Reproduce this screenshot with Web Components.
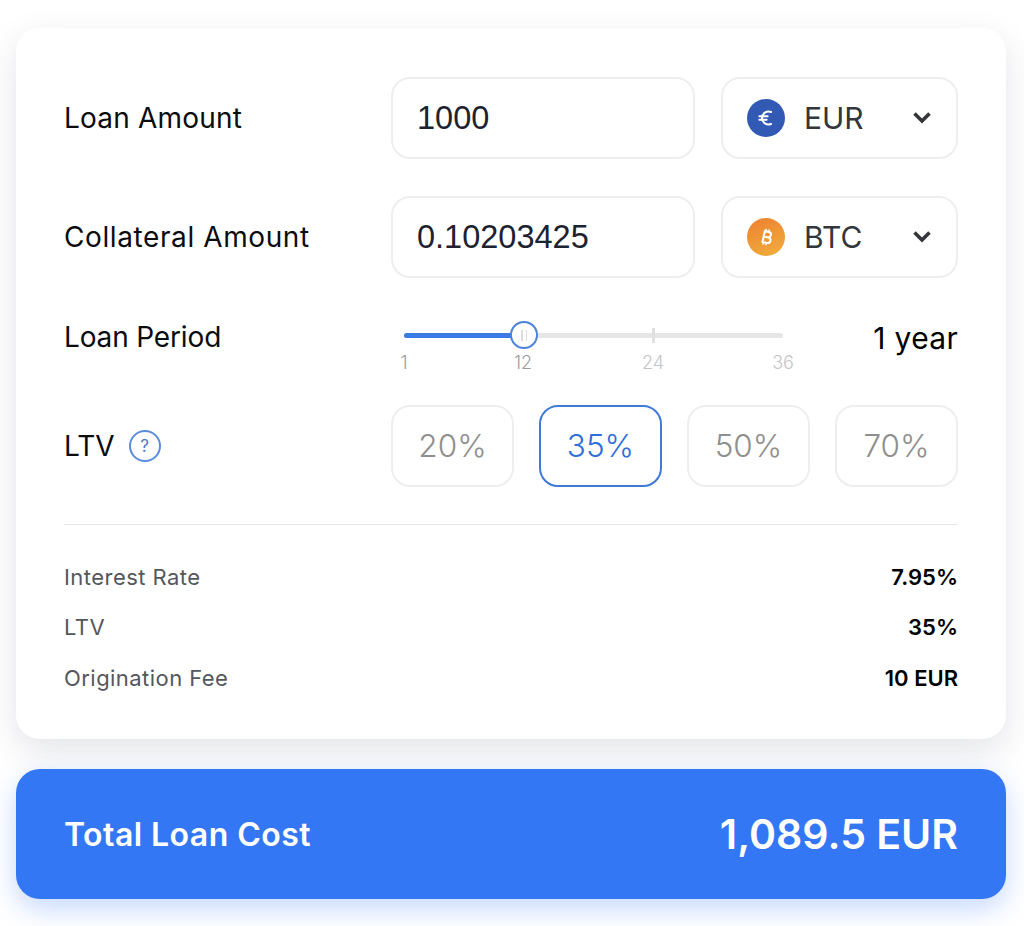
<!DOCTYPE html>
<html lang="en">
<head>
<meta charset="utf-8">
<title>Loan calculator</title>
<style>
  html, body { margin: 0; background: #fff; }
  body { font-family: Inter, "Noto Sans", sans-serif; color: #0b0c10; }
</style>
</head>
<body>
<loan-page>
  <loan-card>
    <form-row>
      <span slot="label">Loan Amount</span>
      <text-box>1000</text-box>
      <currency-select code="EUR"></currency-select>
    </form-row>
    <form-row>
      <span slot="label" style="letter-spacing:.6px">Collateral Amount</span>
      <text-box>0.10203425</text-box>
      <currency-select code="BTC"></currency-select>
    </form-row>
    <period-row></period-row>
    <ltv-row></ltv-row>
    <detail-list>
      <detail-row name="Interest Rate" value="7.95%"></detail-row>
      <detail-row name="LTV" value="35%"></detail-row>
      <detail-row name="Origination Fee" value="10 EUR"></detail-row>
    </detail-list>
  </loan-card>
  <total-bar label="Total Loan Cost" value="1,089.5 EUR"></total-bar>
</loan-page>

<script>
  const icons = {
    EUR: `<svg width="38" height="38" viewBox="0 0 38 38"><circle cx="19" cy="19" r="19" fill="#3259b4"/>
      <path d="M24 13a6.6 6.6 0 0 0-9 6 6.6 6.6 0 0 0 9 6M12.4 17.3h8.2M12.4 20.7h7.2" fill="none" stroke="#fff" stroke-width="2.1" stroke-linecap="round"/></svg>`,
    BTC: `<svg width="38" height="38" viewBox="0 0 38 38"><defs><linearGradient id="btc" x1="0.3" y1="0" x2="0.7" y2="1"><stop offset="0" stop-color="#ee8433"/><stop offset="1" stop-color="#f0ab3c"/></linearGradient></defs>
      <circle cx="19" cy="19" r="19" fill="url(#btc)"/>
      <g transform="rotate(12 19 19)" fill="none" stroke="#fff" stroke-width="2.1"><path d="M15.6 13.4h5a2.7 2.7 0 0 1 0 5.5h-5M15.6 18.9h5.6a2.8 2.8 0 0 1 0 5.7h-5.6M16.6 13v12"/><path d="M17.6 11v2.4M20.6 11v2.4M17.6 24.6v2.4M20.6 24.6v2.4" stroke-width="1.5"/></g></svg>`
  };

  class LoanPage extends HTMLElement {
    constructor() {
      super();
      this.attachShadow({ mode: "open" }).innerHTML = `
        <style>
          :host { display: flex; flex-direction: column; gap: 30px; width: 1006px; height: 926px; box-sizing: border-box; padding: 28px 0 0 16px; }
        </style>
        <slot></slot>`;
    }
  }

  class LoanCard extends HTMLElement {
    constructor() {
      super();
      this.attachShadow({ mode: "open" }).innerHTML = `
        <style>
          :host { display: flex; flex-direction: column; gap: 37px; height: 711px; box-sizing: border-box; padding: 49px 48px 36px 48px; background: #fff; border-radius: 24px; box-shadow: 0 12px 34px rgba(40, 50, 80, .13); }
        </style>
        <slot></slot>`;
    }
  }

  class FormRow extends HTMLElement {
    constructor() {
      super();
      this.attachShadow({ mode: "open" }).innerHTML = `
        <style>
          :host { display: grid; grid-template-columns: 327px 304px 263px; align-items: center; font-size: 28px; letter-spacing: .2px; }
          ::slotted(currency-select) { margin-left: 26px; }
        </style>
        <slot name="label"></slot>
        <slot></slot>`;
    }
  }

  class TextBox extends HTMLElement {
    constructor() {
      super();
      this.attachShadow({ mode: "open" }).innerHTML = `
        <style>
          :host { display: flex; align-items: center; height: 82px; box-sizing: border-box; padding: 0 24px; border: 2px solid #eeeef0; border-radius: 19px; font-family: "Liberation Sans", sans-serif; font-size: 32.5px; letter-spacing: 0; color: #1d2230; }
        </style>
        <slot></slot>`;
    }
  }

  class CurrencySelect extends HTMLElement {
    connectedCallback() {
      const code = this.getAttribute("code");
      this.attachShadow({ mode: "open" }).innerHTML = `
        <style>
          :host { display: flex; align-items: center; height: 82px; box-sizing: border-box; padding: 0 24px; border: 2px solid #eeeef0; border-radius: 19px; font-size: 30px; letter-spacing: 0; color: #33363b; }
          svg.coin { flex: none; margin-right: 19px; }
          span { flex: 1; }
          svg.arrow { flex: none; margin-top: -2px; }
        </style>
        ${icons[code].replace("<svg", '<svg class="coin"')}
        <span>${code}</span>
        <svg class="arrow" width="20" height="13" viewBox="0 0 20 13"><path d="M2.5 2.5 10 10l7.5-7.5" fill="none" stroke="#33363b" stroke-width="3.6"/></svg>`;
    }
  }

  class PeriodRow extends HTMLElement {
    constructor() {
      super();
      this.attachShadow({ mode: "open" }).innerHTML = `
        <style>
          :host { display: grid; grid-template-columns: 340px 379px 1fr; height: 54px; font-size: 28px; letter-spacing: -.15px; }
          .label { padding-top: 5px; line-height: 34px; }
          .slider { position: relative; }
          .track { position: absolute; left: 0; right: 0; top: 18px; height: 5px; border-radius: 3px; background: #e6e6e6; }
          .fill { position: absolute; left: 0; top: 18px; width: 110px; height: 5px; border-radius: 3px 0 0 3px; background: #3a7ae4; }
          .tick { position: absolute; left: 248px; top: 13px; width: 3px; height: 15px; background: #e0e0e0; }
          .thumb { position: absolute; left: 106px; top: 6px; width: 28px; height: 28px; box-sizing: border-box; display: flex; justify-content: center; align-items: center; gap: 3px; background: #fff; border: 2px solid #4a82dc; border-radius: 50%; }
          .thumb i { width: 1.5px; height: 11px; background: #dcdcdc; }
          .marks span { position: absolute; top: 37px; width: 40px; margin-left: -20px; text-align: center; font-size: 18px; font-weight: 300; line-height: 22px; letter-spacing: 0; color: #c4c4c4; }
          .marks span:first-child, .marks span:nth-child(2) { color: #9d9d9d; }
          .value { text-align: right; padding-top: 6px; line-height: 34px; font-size: 30px; color: #000; letter-spacing: .3px; }
        </style>
        <div class="label">Loan Period</div>
        <div class="slider">
          <div class="track"></div>
          <div class="fill"></div>
          <div class="tick"></div>
          <div class="thumb"><i></i><i></i></div>
          <div class="marks"><span style="left:0">1</span><span style="left:119px">12</span><span style="left:249px">24</span><span style="left:379px">36</span></div>
        </div>
        <div class="value">1 year</div>`;
    }
  }

  class LtvRow extends HTMLElement {
    constructor() {
      super();
      const opts = ["20%", "35%", "50%", "70%"];
      this.attachShadow({ mode: "open" }).innerHTML = `
        <style>
          :host { display: grid; grid-template-columns: 327px 1fr; align-items: center; font-size: 28px; }
          .label { display: flex; align-items: center; gap: 14px; }
          .help { width: 32px; height: 32px; box-sizing: border-box; display: flex; align-items: center; justify-content: center; border: 2px solid #5a8ddd; border-radius: 50%; font-size: 17px; color: #4a76b8; }
          .opts { display: grid; grid-template-columns: repeat(4, 1fr); gap: 25px; }
          .opt { height: 82px; box-sizing: border-box; display: flex; align-items: center; justify-content: center; border: 2px solid #eeeef0; border-radius: 19px; font-size: 31.5px; font-weight: 300; color: #8f8f8f; }
          .opt.on { border-color: #3f7ad8; color: #2f6fd8; }
        </style>
        <div class="label">LTV <span class="help">?</span></div>
        <div class="opts">${opts.map(o => `<div class="opt${o == "35%" ? " on" : ""}">${o}</div>`).join("")}</div>`;
    }
  }

  class DetailList extends HTMLElement {
    constructor() {
      super();
      this.attachShadow({ mode: "open" }).innerHTML = `
        <style>
          :host { display: flex; flex-direction: column; border-top: 1.5px solid #e7e7e9; padding-top: 27px; }
        </style>
        <slot></slot>`;
    }
  }

  class DetailRow extends HTMLElement {
    connectedCallback() {
      this.attachShadow({ mode: "open" }).innerHTML = `
        <style>
          :host { display: flex; justify-content: space-between; align-items: center; height: 50.5px; font-size: 22px; }
          .name { color: #54575d; letter-spacing: .45px; }
          .value { font-weight: 600; color: #000; }
        </style>
        <span class="name">${this.getAttribute("name")}</span>
        <span class="value">${this.getAttribute("value")}</span>`;
    }
  }

  class TotalBar extends HTMLElement {
    connectedCallback() {
      this.attachShadow({ mode: "open" }).innerHTML = `
        <style>
          :host { display: flex; justify-content: space-between; align-items: center; height: 130px; box-sizing: border-box; padding: 0 48px; background: #3477f5; border-radius: 24px; color: #fff; box-shadow: 0 10px 28px rgba(52, 119, 245, .28); }
          .label { font-size: 32px; font-weight: 600; letter-spacing: .45px; }
          .value { font-size: 41px; font-weight: 600; }
        </style>
        <span class="label">${this.getAttribute("label")}</span>
        <span class="value">${this.getAttribute("value")}</span>`;
    }
  }

  customElements.define("loan-page", LoanPage);
  customElements.define("loan-card", LoanCard);
  customElements.define("form-row", FormRow);
  customElements.define("text-box", TextBox);
  customElements.define("currency-select", CurrencySelect);
  customElements.define("period-row", PeriodRow);
  customElements.define("ltv-row", LtvRow);
  customElements.define("detail-list", DetailList);
  customElements.define("detail-row", DetailRow);
  customElements.define("total-bar", TotalBar);
</script>
</body>
</html>
